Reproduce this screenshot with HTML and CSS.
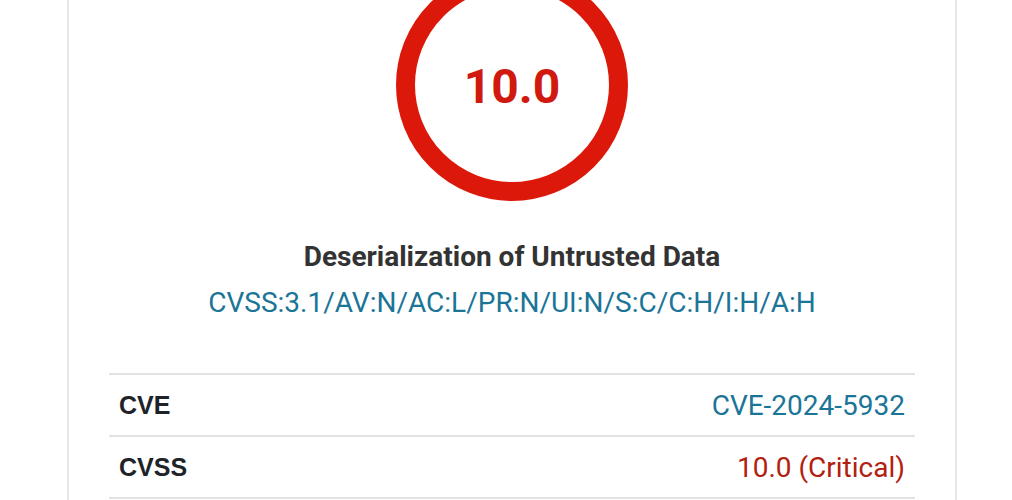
FILE: index.html
```html
<!DOCTYPE html>
<html lang="en">
<head>
<meta charset="utf-8">
<title>CVE-2024-5932</title>
<link rel="stylesheet" href="styles.css">
</head>
<body>
<main class="card">
  <div class="gauge"><span class="score">10.0</span></div>
  <h2 class="title">Deserialization of Untrusted Data</h2>
  <a class="vector" href="#">CVSS:3.1/AV:N/AC:L/PR:N/UI:N/S:C/C:H/I:H/A:H</a>
  <table class="info">
    <tr><th>CVE</th><td><a class="link" href="#">CVE-2024-5932</a></td></tr>
    <tr><th>CVSS</th><td class="critical">10.0 (Critical)</td></tr>
  </table>
</main>
</body>
</html>
```
FILE: styles.css
```css
html, body {
  margin: 0;
  padding: 0;
  background: #ffffff;
  overflow: hidden;
}
body {
  font-family: Roboto, "Liberation Sans", Arial, sans-serif;
  color: #333333;
}
.card {
  box-sizing: border-box;
  width: 890px;
  margin-left: 67px;
  min-height: 500px;
  border-left: 2px solid #e6e6e6;
  border-right: 2px solid #e6e6e6;
  padding: 0 40px;
  display: flex;
  flex-direction: column;
  align-items: center;
}
.gauge {
  box-sizing: border-box;
  width: 232px;
  height: 232px;
  margin-top: -31px;
  border: 19px solid #dc180b;
  border-radius: 50%;
  display: flex;
  align-items: center;
  justify-content: center;
}
.score {
  font-size: 48px;
  font-weight: 700;
  color: #d01a10;
  line-height: 1;
  margin-top: 4px;
}
.title {
  margin: 39px 0 0;
  font-size: 28px;
  font-weight: 700;
  line-height: 34px;
  color: #333333;
}
.vector {
  margin-top: 12px;
  font-size: 28px;
  line-height: 34px;
  color: #1b7597;
  text-decoration: none;
}
.info {
  margin-top: 53px;
  width: 100%;
  border-collapse: collapse;
  border-top: 2px solid #e2e2e2;
}
.info th, .info td {
  height: 60px;
  padding: 0 10px;
  border-bottom: 2px solid #e2e2e2;
  vertical-align: middle;
}
.info th {
  text-align: left;
  font-family: "Liberation Sans", Arial, sans-serif;
  font-size: 25px;
  font-weight: 700;
  color: #1e2328;
}
.info td {
  text-align: right;
  font-size: 28px;
  font-weight: 400;
}
.link {
  color: #1b7597;
  text-decoration: none;
}
.critical {
  color: #b2200f;
}
```
